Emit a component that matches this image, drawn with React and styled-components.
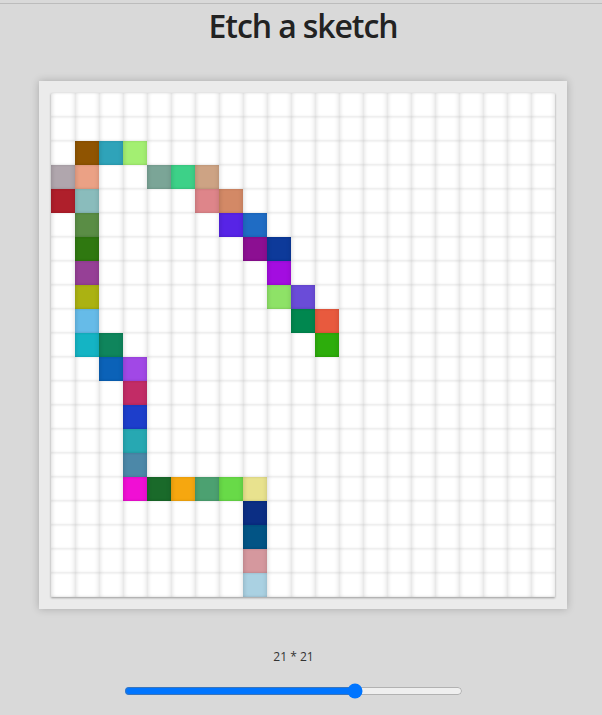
import React, { useState } from "react";
import styled, { createGlobalStyle } from "styled-components";

const GlobalStyle = createGlobalStyle`
  html, body {
    margin: 0;
    padding: 0;
    background: #d9d9d9;
  }
  body {
    font-family: "Open Sans", "Noto Sans", sans-serif;
  }
`;

const Page = styled.div`
  width: 602px;
  min-height: 715px;
  display: flex;
  flex-direction: column;
  align-items: center;
  padding-top: 3px;
  box-sizing: border-box;
`;

const TopRule = styled.div`
  align-self: stretch;
  border-top: 1px solid #bcbcbc;
`;

const Title = styled.h1`
  margin: 2px 0 0 4px;
  font-size: 32px;
  line-height: 40px;
  font-weight: 600;
  letter-spacing: -1.1px;
  color: #222;
`;

const Card = styled.div`
  margin: 35px 0 0 4px;
  padding: 12px;
  background: #ebebeb;
  box-shadow: 0 0 8px rgba(0, 0, 0, 0.22);
`;

const Grid = styled.div`
  display: grid;
  grid-template-columns: repeat(${(p) => p.$size}, 24px);
  grid-auto-rows: 24px;
  background: #fff;
  box-shadow: 0 1px 2px rgba(0, 0, 0, 0.35);
`;

const Cell = styled.div`
  background: ${(p) => p.$color || "#ffffff"};
  box-shadow: inset 3px 0 4px -2px rgba(0, 0, 0, 0.14),
    inset -3px 0 4px -2px rgba(0, 0, 0, 0.1),
    inset 0 -2px 3px -2px rgba(0, 0, 0, 0.1),
    inset 0 2px 3px -2px rgba(0, 0, 0, 0.05);
`;

const Controls = styled.div`
  display: flex;
  flex-direction: column;
  align-items: center;
  margin-top: 40px;
  gap: 18px;
  padding-right: 15px;
`;

const SizeLabel = styled.div`
  font-family: "Open Sans", "Noto Sans", sans-serif;
  font-size: 12px;
  color: #333;
  line-height: 16px;
`;

const Range = styled.input`
  width: 339px;
  margin: 0;
`;

const painted = {
  "2,1": "#8f5401", "2,2": "#2fa3b9", "2,3": "#a3ef72",
  "3,0": "#b0a6ad", "3,1": "#eba185", "3,4": "#7ba597", "3,5": "#3dd188", "3,6": "#cda384",
  "4,0": "#af1f2b", "4,1": "#8abcbc", "4,6": "#de858a", "4,7": "#d38966",
  "5,1": "#5a8d45", "5,7": "#5724e6", "5,8": "#1f6cc4",
  "6,1": "#2f7810", "6,8": "#8c0f92", "6,9": "#0d3a9a",
  "7,1": "#964096", "7,9": "#a30de0",
  "8,1": "#abb212", "8,9": "#8ee267", "8,10": "#6a4cd8",
  "9,1": "#66bbe8", "9,10": "#00874f", "9,11": "#e85a3e",
  "10,1": "#14b4c4", "10,2": "#0f855c", "10,11": "#2dad0c",
  "11,2": "#0b62b8", "11,3": "#a148e6",
  "12,3": "#c22c66",
  "13,3": "#1d3ecb",
  "14,3": "#27a8b2",
  "15,3": "#4c88a8",
  "16,3": "#f00fd4", "16,4": "#1a6a2a", "16,5": "#f6a70f", "16,6": "#4ca171", "16,7": "#68da48", "16,8": "#e8e28e",
  "17,8": "#0b2e84",
  "18,8": "#025485",
  "19,8": "#d5989e",
  "20,8": "#aad1e2",
};

export default function App() {
  const [size, setSize] = useState(21);
  const cells = [];
  for (let r = 0; r < size; r++) {
    for (let c = 0; c < size; c++) {
      cells.push(<Cell key={`${r}-${c}`} $color={size === 21 ? painted[`${r},${c}`] : undefined} />);
    }
  }
  return (
    <>
      <GlobalStyle />
      <Page>
        <TopRule />
        <Title>Etch a sketch</Title>
        <Card>
          <Grid $size={size}>{cells}</Grid>
        </Card>
        <Controls>
          <SizeLabel>
            {size} * {size}
          </SizeLabel>
          <Range
            type="range"
            min="1"
            max="30"
            value={size}
            onChange={(e) => setSize(Number(e.target.value))}
          />
        </Controls>
      </Page>
    </>
  );
}
